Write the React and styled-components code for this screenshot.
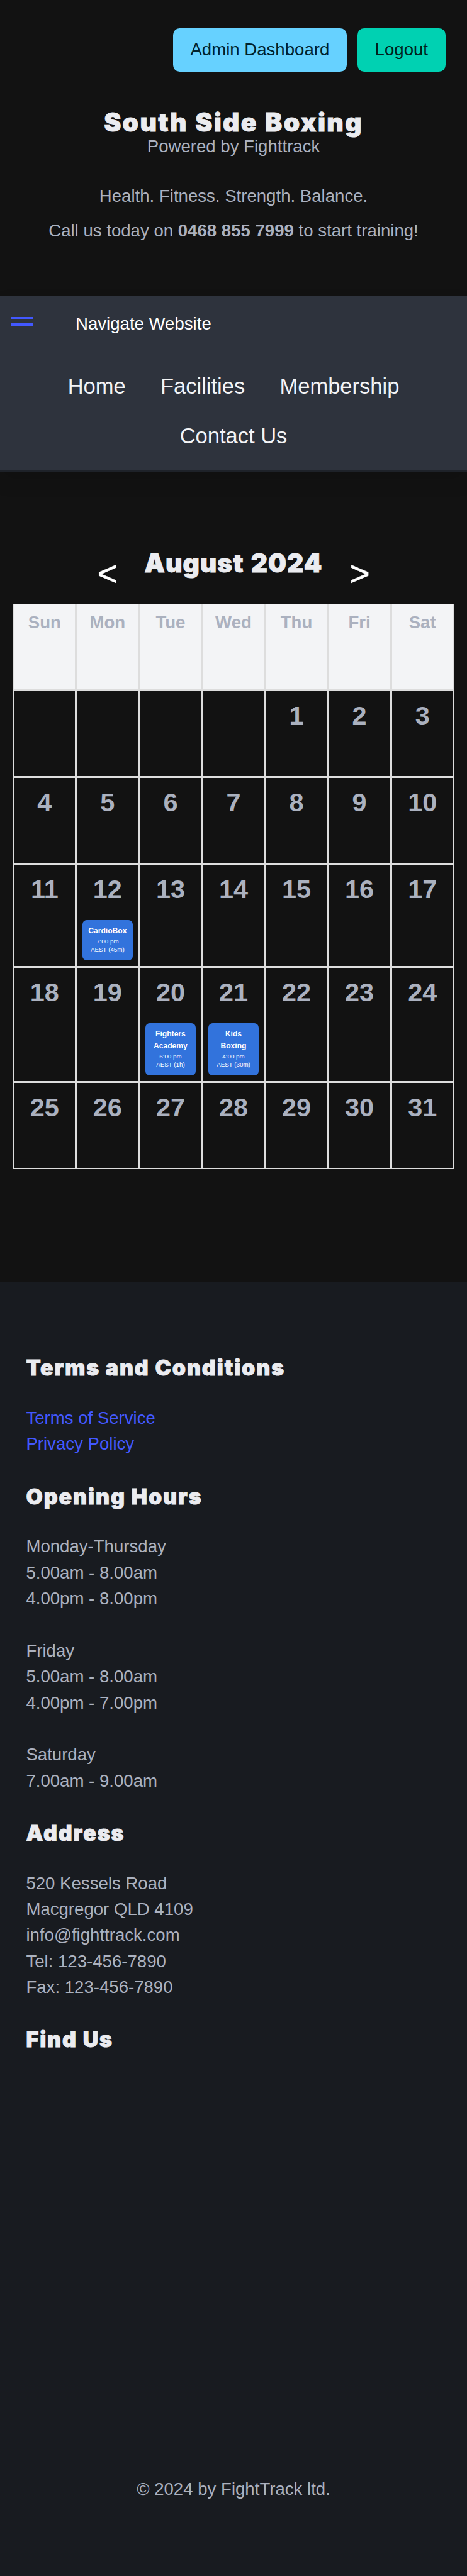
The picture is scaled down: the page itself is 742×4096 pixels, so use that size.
import React from "react";
import styled, { createGlobalStyle, css } from "styled-components";

const GlobalStyle = createGlobalStyle`
  *, *::before, *::after { box-sizing: border-box; }
  html, body { margin: 0; padding: 0; background: #121212; }
  body {
    color: #abb1bf;
    font-family: "Liberation Sans", Arial, sans-serif;
    font-size: 27.6px;
    line-height: 41.4px;
  }
  h1, h2, h3, p, ul { margin: 0; padding: 0; font-weight: 400; }
  ul { list-style: none; }
  a { color: inherit; text-decoration: none; }
`;

const Page = styled.div`
  display: flex;
  flex-direction: column;
  width: 742px;
  height: 4096px;
  overflow: hidden;
`;

const heavy = css`
  font-family: Inter, "Arial Black", sans-serif;
  font-weight: 900;
  color: #ebecf0;
  -webkit-text-stroke: 0.9px #ebecf0;
  white-space: nowrap;
`;

const Header = styled.header`
  height: 471px;
  text-align: center;
`;

const Actions = styled.div`
  display: flex;
  justify-content: flex-end;
  gap: 17.3px;
  padding: 45px 34.5px 0;
  margin-bottom: 56.5px;
`;

const Button = styled.button`
  height: 69px;
  padding: 0 27.5px 2px;
  border: 0;
  border-radius: 10.4px;
  font: inherit;
  color: ${(p) => (p.$tone === "info" ? "#00222e" : "#00211c")};
  background: ${(p) => (p.$tone === "info" ? "#66d1ff" : "#00d1b2")};
`;

const Brand = styled.h1`
  ${heavy}
  font-size: 40.8px;
  line-height: 46px;
  letter-spacing: 0.057em;
  word-spacing: 0.02em;
`;

const Line = styled.p`
  margin-top: ${(p) => p.$gap || 0}px;
`;

const Nav = styled.nav`
  height: 279.5px;
  background: #2e333d;
  border-bottom: 3px solid #1e2229;
  box-shadow: 0 14px 28px rgba(10, 10, 10, 0.1);
  color: #f3f4f6;
`;

const NavTop = styled.div`
  display: flex;
  align-items: flex-start;
  padding: 23px 17px 0;
  height: 103.5px;
  color: #fff;
`;

const Burger = styled.div`
  display: flex;
  flex-direction: column;
  justify-content: space-between;
  width: 34.5px;
  height: 14px;
  margin: 10px 68.5px 0 0;

  &::before,
  &::after {
    content: "";
    height: 4px;
    background: #4258ff;
  }
`;

const NavLinks = styled.ul`
  display: flex;
  flex-wrap: wrap;
  justify-content: center;
  column-gap: 55.3px;
  padding: 0 80px;
  font-size: 34.5px;
  line-height: 79.4px;
`;

const Main = styled.main`
  height: 1287.5px;
  padding: 121px 20.8px 0;
`;

const MonthBar = styled.div`
  display: flex;
  justify-content: center;
  height: 88px;
`;

const Month = styled.h2`
  ${heavy}
  width: 342px;
  font-size: 40.8px;
  line-height: 46px;
  text-align: center;
  letter-spacing: 0.024em;
  word-spacing: 0.05em;
`;

const Arrow = styled.span`
  width: 59px;
  padding-top: 17px;
  font-size: 55.2px;
  line-height: 46px;
  text-align: center;
  color: #fff;
  -webkit-text-stroke: 0.5px #fff;
`;

const Calendar = styled.div`
  display: grid;
  grid-template-columns: repeat(7, 1fr);
  grid-template-rows: 134.6px 134.6px 134.6px 160.5px 179.5px 134.6px;
  gap: 3.45px;
  padding: 1.73px;
  background: #ddd;
`;

const Cell = styled.div`
  padding: 8px 8.6px;
  text-align: center;
  font-weight: 700;
  background: #121212;
  font-size: 41.4px;
  line-height: 62px;
`;

const DayName = styled(Cell)`
  background: #f3f4f6;
  font-size: 27.6px;
  line-height: 41.4px;
`;

const Event = styled.div`
  margin-top: 18px;
  padding: 7.3px 0 9.9px;
  border-radius: 6.9px;
  background: #3273dc;
  color: #fff;
  font-size: 9.8px;
  font-weight: 400;
  line-height: 13.8px;
`;

const EventTitle = styled.div`
  font-size: 12.1px;
  font-weight: 700;
  line-height: 19px;
`;

const Footer = styled.footer`
  flex: 1;
  padding: 111.4px 41.4px 0;
  background: #181b20;
`;

const Heading = styled.h3`
  ${heavy}
  font-size: 34px;
  line-height: 52px;
  padding-bottom: 32.6px;
  letter-spacing: 0.056em;
`;

const Lines = styled.div`
  margin-bottom: 36.8px;
  white-space: pre-line;
  color: ${(p) => (p.$link ? "#4258ff" : "inherit")};
`;

const Copyright = styled.p`
  margin-top: 635px;
  text-align: center;
`;

const DAY_NAMES = ["Sun", "Mon", "Tue", "Wed", "Thu", "Fri", "Sat"];

const EVENTS = {
  12: { title: ["CardioBox"], time: "7:00 pm", zone: "AEST (45m)" },
  20: { title: ["Fighters", "Academy"], time: "6:00 pm", zone: "AEST (1h)" },
  21: { title: ["Kids", "Boxing"], time: "4:00 pm", zone: "AEST (30m)" },
};

const CELLS = [...Array(4).fill(null), ...Array.from({ length: 31 }, (_, i) => i + 1)];

function Day({ date }) {
  const event = EVENTS[date];
  return (
    <Cell>
      {date}
      {event && (
        <Event>
          {event.title.map((word) => (
            <EventTitle key={word}>{word}</EventTitle>
          ))}
          <div>{event.time}</div>
          <div>{event.zone}</div>
        </Event>
      )}
    </Cell>
  );
}

export default function App() {
  return (
    <Page>
      <GlobalStyle />
      <Header>
        <Actions>
          <Button $tone="info">Admin Dashboard</Button>
          <Button $tone="primary">Logout</Button>
        </Actions>
        <Brand>South Side Boxing</Brand>
        <Line $gap={-5}>Powered by Fighttrack</Line>
        <Line $gap={37.9}>Health. Fitness. Strength. Balance.</Line>
        <Line $gap={13.8}>
          Call us today on <strong>0468 855 7999</strong> to start training!
        </Line>
      </Header>

      <Nav>
        <NavTop>
          <Burger />
          <span>Navigate Website</span>
        </NavTop>
        <NavLinks>
          <li><a href="#home">Home</a></li>
          <li><a href="#facilities">Facilities</a></li>
          <li><a href="#membership">Membership</a></li>
          <li><a href="#contact">Contact Us</a></li>
        </NavLinks>
      </Nav>

      <Main>
        <MonthBar>
          <Arrow>&lt;</Arrow>
          <Month>August 2024</Month>
          <Arrow>&gt;</Arrow>
        </MonthBar>
        <Calendar>
          {DAY_NAMES.map((name) => (
            <DayName key={name}>{name}</DayName>
          ))}
          {CELLS.map((date, i) => (
            <Day key={i} date={date} />
          ))}
        </Calendar>
      </Main>

      <Footer>
        <Heading>Terms and Conditions</Heading>
        <Lines $link>
          <a href="#terms">Terms of Service</a>
          <br />
          <a href="#privacy">Privacy Policy</a>
        </Lines>
        <Heading>Opening Hours</Heading>
        <Lines>
          {"Monday-Thursday\n5.00am - 8.00am\n4.00pm - 8.00pm\n\nFriday\n5.00am - 8.00am\n4.00pm - 7.00pm\n\nSaturday\n7.00am - 9.00am"}
        </Lines>
        <Heading>Address</Heading>
        <Lines>
          {"520 Kessels Road\nMacgregor QLD 4109\ninfo@fighttrack.com\nTel: 123-456-7890\nFax: 123-456-7890"}
        </Lines>
        <Heading>Find Us</Heading>
        <Copyright>© 2024 by FightTrack ltd.</Copyright>
      </Footer>
    </Page>
  );
}
